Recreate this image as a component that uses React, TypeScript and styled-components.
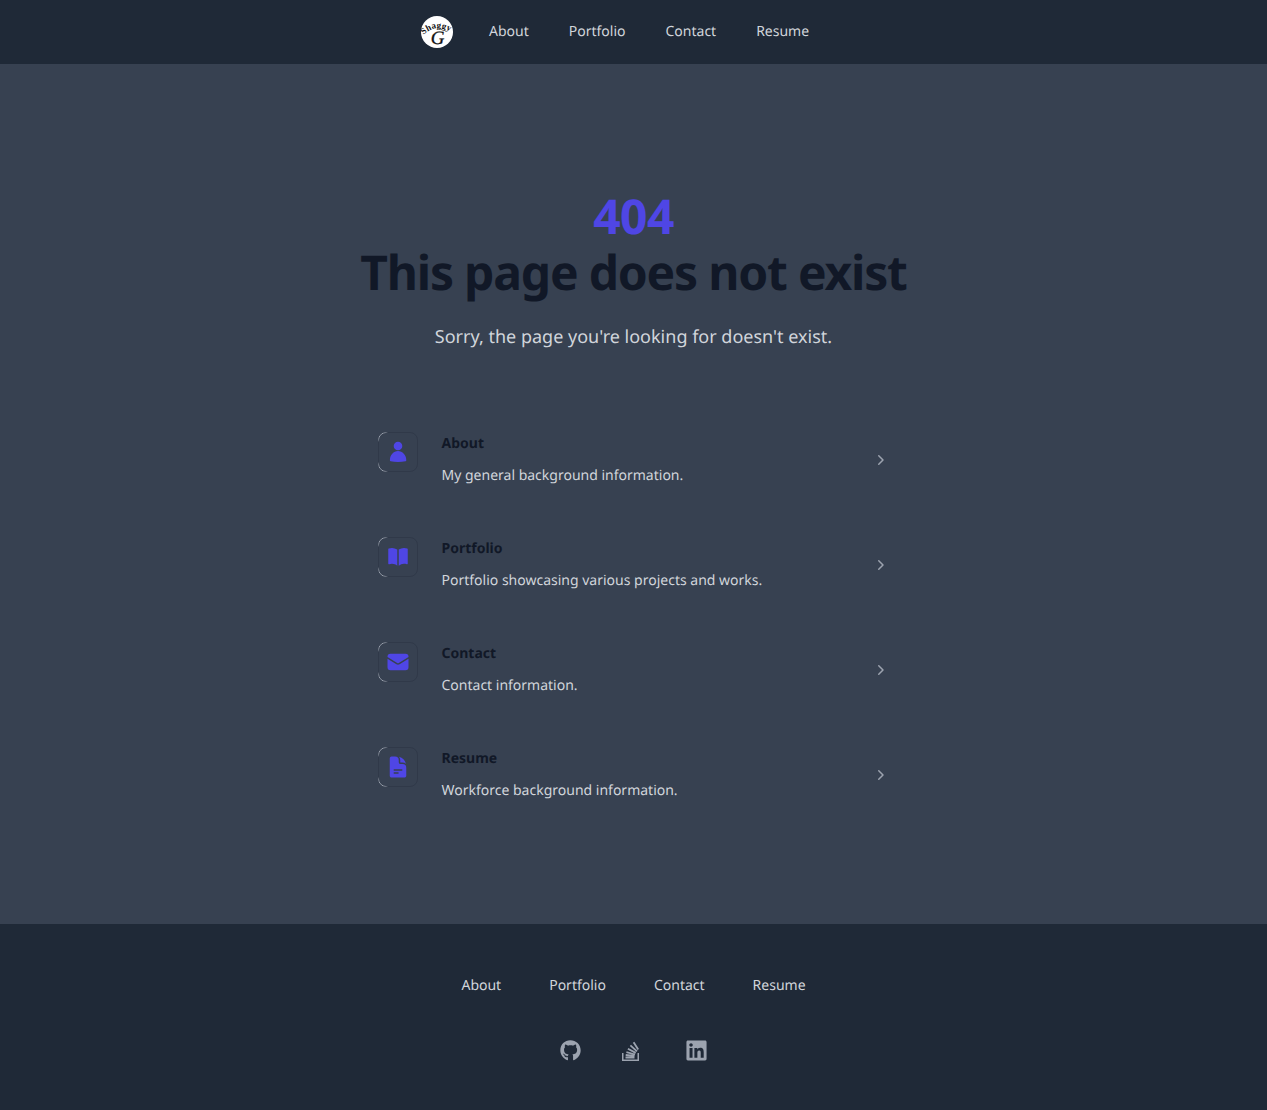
import React from "react";
import styled, { createGlobalStyle } from "styled-components";
import { FaGithub, FaLinkedin } from "react-icons/fa";
import {
  HiBookOpen,
  HiDocumentText,
  HiEnvelope,
  HiMiniChevronRight,
} from "react-icons/hi2";

const GlobalStyle = createGlobalStyle`
  html, body {
    margin: 0;
    padding: 0;
    background: #374151;
    font-family: "Noto Sans", sans-serif;
    text-rendering: geometricPrecision;
  }
  * {
    box-sizing: border-box;
  }
`;

const Page = styled.div`
  display: flex;
  flex-direction: column;
  min-height: 1110px;
`;

const Header = styled.header`
  align-items: center;
  background: #1f2937;
  display: flex;
  height: 64px;
  padding-left: 421px;
`;

const Logo = styled.svg`
  height: 32px;
  margin-right: 24px;
  width: 32px;
`;

const NavLink = styled.a`
  color: #d1d5db;
  font-size: 14px;
  line-height: 20px;
  padding: 8px 12px;
  margin-right: 16px;
`;

const Main = styled.main`
  align-items: center;
  display: flex;
  flex-direction: column;
  height: 860px;
  padding-top: 123px;
`;

const Code = styled.p`
  color: #4f46e5;
  font-size: 48px;
  font-weight: 700;
  letter-spacing: -0.6px;
  line-height: 60px;
  margin: 0;
`;

const Title = styled.h1`
  color: #111827;
  font-size: 48px;
  font-weight: 700;
  letter-spacing: -1.2px;
  line-height: 52px;
  margin: 0;
`;

const Lead = styled.p`
  color: #d1d5db;
  font-size: 18px;
  line-height: 28px;
  margin: 24px 0 0;
`;

const List = styled.ul`
  list-style: none;
  margin: 57px 0 0;
  padding: 0;
  width: 512px;
`;

const Row = styled.li`
  align-items: flex-start;
  display: flex;
  height: 105px;
  padding: 24px 0;
`;

const IconBox = styled.span`
  align-items: center;
  border: 1px solid rgba(17, 24, 39, 0.18);
  border-radius: 8px;
  color: #4f46e5;
  display: flex;
  flex-shrink: 0;
  height: 40px;
  justify-content: center;
  position: relative;
  width: 40px;

  &::before {
    border: 1px solid #9ca3af;
    border-radius: 8px;
    content: "";
    inset: -1px;
    mask-image: radial-gradient(circle 10px at 0 0, #000 60%, transparent),
      radial-gradient(circle 10px at 0 100%, #000 60%, transparent);
    position: absolute;
  }
`;

const RowBody = styled.div`
  flex: 1;
  margin-left: 24px;
`;

const RowTitle = styled.h3`
  color: #111827;
  font-size: 14px;
  font-weight: 700;
  line-height: 24px;
  margin: 0;
`;

const RowText = styled.p`
  color: #d1d5db;
  font-size: 14px;
  line-height: 20px;
  margin: 10px 0 0;
`;

const Chevron = styled(HiMiniChevronRight)`
  align-self: center;
  color: #9ca3af;
  height: 20px;
  margin-top: -2px;
  width: 20px;
`;

const Footer = styled.footer`
  align-items: center;
  background: #1f2937;
  display: flex;
  flex-direction: column;
  height: 186px;
  padding-top: 50px;
`;

const FooterLinks = styled.nav`
  display: flex;
  gap: 24px;
`;

const FooterLink = styled.a`
  color: #d1d5db;
  font-size: 14px;
  line-height: 24px;
  padding: 0 12px;
`;

const Socials = styled.div`
  align-items: center;
  display: flex;
  gap: 41px;
  height: 24px;
  margin-top: 40px;
`;

const SocialLink = styled.a<{ $trailing?: number }>`
  color: #9ca3af;
  display: flex;
  font-size: 21px;
  margin-right: ${(props) => props.$trailing ?? 0}px;
`;

const LinkedIn = styled(FaLinkedin)`
  font-size: 23px;
`;

const StackIcon = () => (
  <svg width="17" height="21" viewBox="0 0 17 21" fill="none" stroke="currentColor">
    <path d="M.75 13v7.2h15.5V13" strokeWidth="1.5" />
    <path d="M3.5 17.5h9M3.7 15l8.9.8M4.4 12.2l8.6 2.3M5.9 8.8l7.8 4.1M8.4 5.4l6.6 6M11.6 2.2l4.6 7.4" strokeWidth="1.8" />
  </svg>
);

const UserIcon = ({ size }: { size: number }) => (
  <svg width={size} height={size} viewBox="0 0 24 24" fill="currentColor">
    <circle cx="12" cy="6" r="4.3" />
    <path d="M3.9 20.2C3.9 15 7.6 11 12 11s8.3 4 8.3 9.2c0 .6-.3.9-.8 1-2.4.5-4.9.8-7.5.8s-5.1-.3-7.3-.8c-.6-.1-.8-.4-.8-1z" />
  </svg>
);

const pages = [
  { name: "About", text: "My general background information.", Icon: UserIcon },
  { name: "Portfolio", text: "Portfolio showcasing various projects and works.", Icon: HiBookOpen },
  { name: "Contact", text: "Contact information.", Icon: HiEnvelope },
  { name: "Resume", text: "Workforce background information.", Icon: HiDocumentText },
];

const App = () => (
  <Page>
    <GlobalStyle />
    <Header>
      <Logo viewBox="0 0 32 32">
        <circle cx="16" cy="16" r="16" fill="#fff" />
        <path id="hair" d="M2.5 19 Q14 7 29.5 16" fill="none" />
        <text fontFamily="Liberation Serif, serif" fontSize="9" fontWeight="700" fill="#111">
          <textPath href="#hair" textLength="29">Shaggy</textPath>
        </text>
        <text x="16.5" y="28" textAnchor="middle" fontFamily="Liberation Serif, serif" fontStyle="italic" fontSize="19" stroke="#111" strokeWidth="0.3" fill="#111">
          G
        </text>
      </Logo>
      {pages.map((p) => (
        <NavLink key={p.name}>{p.name}</NavLink>
      ))}
    </Header>
    <Main>
      <Code>404</Code>
      <Title>This page does not exist</Title>
      <Lead>Sorry, the page you're looking for doesn't exist.</Lead>
      <List>
        {pages.map(({ name, text, Icon }) => (
          <Row key={name}>
            <IconBox>
              <Icon size={24} />
            </IconBox>
            <RowBody>
              <RowTitle>{name}</RowTitle>
              <RowText>{text}</RowText>
            </RowBody>
            <Chevron />
          </Row>
        ))}
      </List>
    </Main>
    <Footer>
      <FooterLinks>
        {pages.map((p) => (
          <FooterLink key={p.name}>{p.name}</FooterLink>
        ))}
      </FooterLinks>
      <Socials>
        <SocialLink><FaGithub /></SocialLink>
        <SocialLink $trailing={5}><StackIcon /></SocialLink>
        <SocialLink><LinkedIn /></SocialLink>
      </Socials>
    </Footer>
  </Page>
);

export default App;
